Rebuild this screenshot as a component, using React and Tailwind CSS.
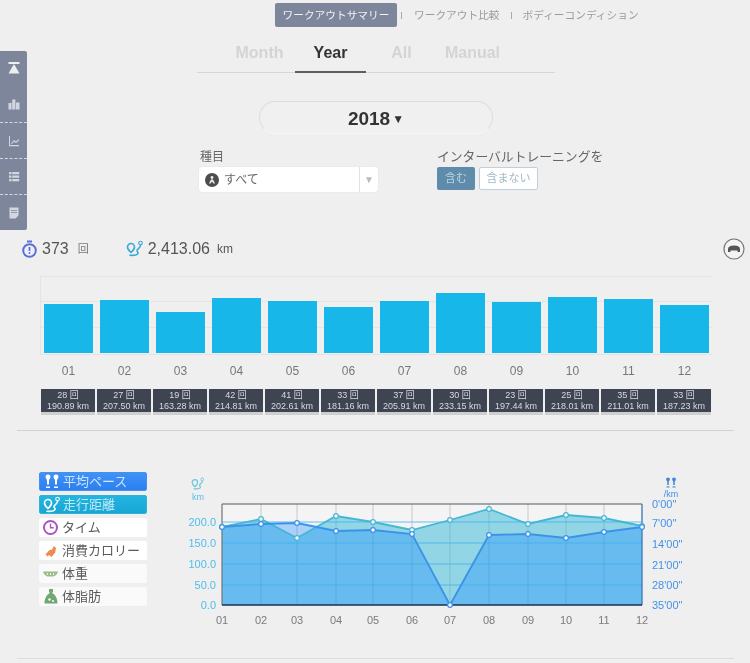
import React from 'react';

const months = [
  { m: '01', top: 304, count: 28, km: '190.89' },
  { m: '02', top: 300, count: 27, km: '207.50' },
  { m: '03', top: 312, count: 19, km: '163.28' },
  { m: '04', top: 298, count: 42, km: '214.81' },
  { m: '05', top: 301, count: 41, km: '202.61' },
  { m: '06', top: 307, count: 33, km: '181.16' },
  { m: '07', top: 301, count: 37, km: '205.91' },
  { m: '08', top: 293, count: 30, km: '233.15' },
  { m: '09', top: 302, count: 23, km: '197.44' },
  { m: '10', top: 297, count: 25, km: '218.01' },
  { m: '11', top: 299, count: 35, km: '211.01' },
  { m: '12', top: 305, count: 33, km: '187.23' },
];

const xs = [222, 261, 297, 336, 373, 412, 450, 489, 528, 566, 604, 642];
const dist = [527, 519, 538, 516, 522, 530, 520, 509, 524, 515, 518, 526];
const pace = [527, 524, 523, 531, 530, 534, 605, 535, 534, 538, 532, 527];

const line = (ys) => xs.map((x, i) => `${x},${ys[i]}`).join(' ');
const area = (ys) => `222,605 ${line(ys)} 642,605`;

const RouteIcon = ({ color, size = 18 }) => (
  <svg width={size} height={size} viewBox="0 0 18 18" fill="none">
    <path d="M5 3.500a3.500 3.500 0 0 0-3.500 3.500C1.500 9.500 5 12.500 5 12.500S8.500 9.500 8.500 7A3.500 3.500 0 0 0 5 3.500z" stroke={color} strokeWidth="1.600" />
    <circle cx="14.500" cy="3" r="1.800" stroke={color} strokeWidth="1.100" />
    <path d="M14.500 5.500c-.3 2.500-3 3.200-3.500 4.800-.4 1.400 1.500 1.600 1 3-.5 1.400-4 2.200-8 2" stroke={color} strokeWidth="1.600" strokeLinecap="round" />
  </svg>
);

const FeetIcon = ({ color, size = 16 }) => (
  <svg width={size} height={size} viewBox="0 0 16 16" fill={color}>
    <path d="M1.500 2.500a2.500 2 0 0 1 5 0c0 1.500-1 2.500-1.500 3.500v4.500H3V6C2.500 5 1.500 4 1.500 2.500z" />
    <path d="M9.500 2.500a2.500 2 0 0 1 5 0c0 1.500-1 2.500-1.500 3.500v4.500h-2V6c-.5-1-1.500-2-1.500-3.500z" />
    <rect x="2" y="12.500" width="4" height="1.500" />
    <rect x="10" y="12.500" width="4" height="1.500" />
  </svg>
);

const SideIcon = ({ kind }) => (
  <svg width="14" height="14" viewBox="0 0 14 14" fill={kind === 'top' ? '#eceef2' : '#d3d6df'}>
    {kind === 'top' && (
      <>
        <rect x="1.500" y="1" width="11" height="2" />
        <path d="M7 3 12.500 12.500h-11z" />
      </>
    )}
    {kind === 'bars' && (
      <>
        <rect x="1.500" y="6" width="3" height="6.500" />
        <rect x="5.200" y="2.500" width="3.200" height="10" />
        <rect x="9" y="5.500" width="3.500" height="7" />
      </>
    )}
    {kind === 'line' && (
      <>
        <path d="M2 2h1v9h9v1.200H2z" />
        <path d="M4 9.500 7 6l2 1.500 3-2.500v1.500l-3 2.500-2-1.500-2 2.500z" />
      </>
    )}
    {kind === 'list' && (
      <>
        <rect x="2" y="2" width="2.500" height="2.300" />
        <rect x="5.200" y="2" width="7" height="2.300" />
        <rect x="2" y="5.500" width="2.500" height="2.300" />
        <rect x="5.200" y="5.500" width="7" height="2.300" />
        <rect x="2" y="9" width="2.500" height="2.300" />
        <rect x="5.200" y="9" width="7" height="2.300" />
      </>
    )}
    {kind === 'doc' && (
      <path d="M2.500 1.500h9v8L8.500 12.500h-6zM4 4v.8h6V4zm0 2.200V7h6v-.8z" fillRule="evenodd" />
    )}
  </svg>
);

const Sidebar = () => (
  <div className="absolute left-0 top-[51px] w-[27px] h-[179px] bg-[#7e869c] rounded-r-[2px] flex flex-col">
    <div className="h-[34px] flex items-center justify-center"><SideIcon kind="top" /></div>
    <div className="h-[37px] flex items-center justify-center"><SideIcon kind="bars" /></div>
    <div className="h-[36px] flex items-center justify-center border-t border-dashed border-[#d5d7e0]"><SideIcon kind="line" /></div>
    <div className="h-[36px] flex items-center justify-center border-t border-dashed border-[#d5d7e0]"><SideIcon kind="list" /></div>
    <div className="h-[36px] flex items-center justify-center border-t border-dashed border-[#d5d7e0]"><SideIcon kind="doc" /></div>
  </div>
);

const legend = [
  {
    label: '平均ペース',
    cls: 'bg-gradient-to-b from-[#3f92f7] to-[#2b7ff0] text-[#cfe3ff] border border-[#4a90e8]',
    icon: <FeetIcon color="#ffffff" />,
  },
  {
    label: '走行距離',
    cls: 'bg-gradient-to-b from-[#22b4de] to-[#19a6d6] text-[#bfe8f5] border border-[#2fb4d8]',
    icon: <RouteIcon color="#ffffff" />,
  },
  {
    label: 'タイム',
    cls: 'bg-white text-[#5a5a5a]',
    icon: (
      <svg width="17" height="17" viewBox="0 0 17 17" fill="none" stroke="#a955c4">
        <circle cx="8.500" cy="8.500" r="6.500" strokeWidth="2" />
        <path d="M8.500 4.500v4.300h3.200" strokeWidth="1.400" />
      </svg>
    ),
  },
  {
    label: '消費カロリー',
    cls: 'bg-white text-[#5a5a5a]',
    icon: (
      <svg width="16" height="16" viewBox="0 0 16 16" fill="#f08a4e">
        <path d="M2.500 11.500 6 7.500l1.500-1 1 .8L11 3l2 2-.8 4.500L8.500 14l-2.500-2-1.500 1.500z" />
      </svg>
    ),
  },
  {
    label: '体重',
    cls: 'bg-white/70 text-[#5a5a5a]',
    icon: (
      <svg width="17" height="16" viewBox="0 0 17 16" fill="#9dbb84">
        <path d="M1 5.500h15c-.5 2.500-2.500 4.500-4.500 5h-6C3.500 10 1.500 8 1 5.500z" />
        <path d="M5 7l.8 2M8.500 7v2M12 7l-.8 2" stroke="#ffffff" strokeWidth=".9" />
      </svg>
    ),
  },
  {
    label: '体脂肪',
    cls: 'bg-white/70 text-[#5a5a5a]',
    icon: (
      <svg width="16" height="17" viewBox="0 0 16 17" fill="#6fa873">
        <path d="M6 1h4v2.500l-.8 1.500c2.800 1.500 5.300 5 5.300 10.500h-13C1.500 10 4 6.500 6.800 5L6 3.500z" />
        <circle cx="6.500" cy="11.500" r="1.200" fill="#ffffff" />
        <circle cx="10" cy="13" r="1" fill="#ffffff" />
      </svg>
    ),
  },
];

const leftAxis = [
  ['200.0', 526],
  ['150.0', 547],
  ['100.0', 568],
  ['50.0', 589],
  ['0.0', 609],
];

const rightAxis = [
  ["0'00\"", 508],
  ["7'00\"", 527],
  ["14'00\"", 548],
  ["21'00\"", 569],
  ["28'00\"", 589],
  ["35'00\"", 609],
];

const PaceChart = () => (
  <svg width="530" height="160" viewBox="180 470 530 160" className="block">
    <rect x="222" y="504" width="420" height="101" fill="#f4f4f4" />
    {xs.map((x) => (
      <line key={x} x1={x} y1="504" x2={x} y2="605" stroke="#c4c8cc" strokeWidth="1" />
    ))}
    <polygon points={area(dist)} fill="#2fb8d8" fillOpacity="0.5" />
    <polygon points={area(pace)} fill="#0a81ff" fillOpacity="0.31" />
    {[522, 543, 564, 585].map((y) => (
      <line key={y} x1="222" y1={y} x2="642" y2={y} stroke="#3fb0f0" strokeWidth="1" strokeOpacity="0.8" />
    ))}
    <line x1="222" y1="504" x2="642" y2="504" stroke="#555a5e" strokeWidth="1.200" />
    <line x1="222" y1="504" x2="222" y2="605" stroke="#6a7078" strokeWidth="1" />
    <line x1="642" y1="504" x2="642" y2="605" stroke="#3b78ba" strokeWidth="1.200" />
    <line x1="222" y1="605" x2="642" y2="605" stroke="#17304f" strokeWidth="1.400" />
    <polyline points={line(dist)} fill="none" stroke="#45b7d4" strokeWidth="1.800" />
    <polyline points={line(pace)} fill="none" stroke="#3a93e8" strokeWidth="1.800" />
    {xs.map((x, i) => (
      <circle key={`d${x}`} cx={x} cy={dist[i]} r="2.300" fill="#ffffff" stroke="#45b7d4" strokeWidth="1.200" />
    ))}
    {xs.map((x, i) => (
      <circle key={`p${x}`} cx={x} cy={pace[i]} r="2.300" fill="#ffffff" stroke="#3a93e8" strokeWidth="1.200" />
    ))}
    <g fontSize="11" fill="#4fbdec" textAnchor="end">
      {leftAxis.map(([t, y]) => (
        <text key={t} x="216" y={y}>{t}</text>
      ))}
    </g>
    <g fontSize="11" fill="#4490e6">
      {rightAxis.map(([t, y]) => (
        <text key={t} x="652" y={y}>{t}</text>
      ))}
    </g>
    <g fontSize="11" fill="#7b7b7b" textAnchor="middle">
      {xs.map((x, i) => (
        <text key={x} x={x} y="624">{months[i].m}</text>
      ))}
    </g>
    <text x="198" y="500" fontSize="9" fill="#58bfe8" textAnchor="middle">km</text>
    <text x="671" y="497" fontSize="9" fill="#4490e6" textAnchor="middle">/km</text>
    <svg x="191" y="477" width="14" height="14" viewBox="0 0 18 18">
      <RouteIcon color="#6cc6de" />
    </svg>
    <svg x="665" y="477" width="12" height="12" viewBox="0 0 16 16">
      <FeetIcon color="#3f86d8" />
    </svg>
  </svg>
);

export default function App() {
  return (
    <div className="w-[750px] h-[663px] overflow-hidden bg-[#efefef]">
      <div className="relative h-[663px] blur-[0.4px] font-['Liberation_Sans','Noto_Sans_CJK_JP',sans-serif]">
        <Sidebar />

        <nav className="flex items-center pl-[275px] pt-[3px] text-[10.7px] text-[#9a9a9a]">
          <span className="w-[122px] h-[24px] flex items-center justify-center rounded-[2px] bg-[#7e869c] text-[#f2f3f6]">ワークアウトサマリー</span>
          <span className="ml-[4px] w-px h-[7px] bg-[#aaa]" />
          <span className="ml-[12px]">ワークアウト比較</span>
          <span className="ml-[11px] w-px h-[7px] bg-[#aaa]" />
          <span className="ml-[11px]">ボディーコンディション</span>
        </nav>

        <div className="ml-[197px] w-[358px] h-[33px] mt-[13px] pl-[27px] flex border-b border-[#d6d6d6] text-[16px] font-bold text-[#d4d4d4]">
          <span className="w-[71px] text-center leading-[26px]">Month</span>
          <span className="w-[71px] h-[33px] text-center leading-[26px] text-[#333] border-b-2 border-[#5e5e5e]">Year</span>
          <span className="w-[71px] text-center leading-[26px]">All</span>
          <span className="w-[71px] text-center leading-[26px]">Manual</span>
        </div>

        <div className="ml-[259px] w-[234px] h-[33px] mt-[28px] pt-[3px] flex items-center justify-center gap-[2px] rounded-full border border-[#dcdcdc] border-b-[#f6f6f6] bg-[#f0f0f0] text-[19px] font-bold text-[#333]">
          2018<span className="text-[12px] leading-none">▼</span>
        </div>

        <div className="flex mt-[15px] ml-[199px] h-[44px]">
          <div className="w-[179px]">
            <div className="pl-px text-[12px] leading-[16px] mb-[2px] text-[#666]">種目</div>
            <div className="h-[25px] flex items-center rounded-[3px] bg-white shadow-[0_0_1px_#ccc] pl-[6px]">
              <svg width="14" height="14" viewBox="0 0 14 14">
                <circle cx="7" cy="7" r="7" fill="#4d4d4d" />
                <circle cx="7" cy="4.500" r="1.400" fill="#f0f0f0" />
                <path d="M4 10.500 6 6.500h2l2 4H8.500L7 8.500l-1.500 2z" fill="#f0f0f0" />
              </svg>
              <span className="ml-[5px] text-[12px] text-[#666]">すべて</span>
              <span className="ml-auto w-[19px] h-[25px] border-l border-[#e2e2e2] flex items-center justify-center text-[10px] text-[#bbb]">▼</span>
            </div>
          </div>
          <div className="ml-[59px]">
            <div className="text-[12.8px] leading-[16px] mb-[2px] text-[#666]">インターバルトレーニングを</div>
            <div className="flex gap-[4px]">
              <span className="w-[38px] h-[23px] flex items-center justify-center rounded-[2px] bg-[#5f8cab] text-[11px] text-[#bcd2e0]">含む</span>
              <span className="w-[59px] h-[23px] flex items-center justify-center rounded-[2px] bg-white border border-[#bcd0de] text-[11px] text-[#a0b8c8]">含まない</span>
            </div>
          </div>
        </div>

        <div className="flex items-center h-[22px] mt-[45px] pl-[21px] pr-[5px] text-[16px] text-[#555]">
          <svg width="17" height="18" viewBox="0 0 17 18" fill="none">
            <rect x="6" y="0.500" width="5" height="2" fill="#5b6fd6" />
            <circle cx="8.500" cy="10.500" r="6.300" stroke="#5b6fd6" strokeWidth="2" fill="#eef0fb" />
            <path d="M8.500 7v4" stroke="#5b6fd6" strokeWidth="1.800" />
            <circle cx="8.500" cy="13" r="1" fill="#5b6fd6" />
          </svg>
          <span className="ml-[4px]">373</span>
          <span className="ml-[9px] text-[11px] text-[#777]">回</span>
          <span className="ml-[37px]"><RouteIcon color="#3aa6d8" /></span>
          <span className="ml-[4px]">2,413.06</span>
          <span className="ml-[7px] text-[12px]">km</span>
          <svg className="ml-auto" width="22" height="22" viewBox="0 0 22 22" fill="none">
            <circle cx="11" cy="11" r="10" stroke="#777" strokeWidth="1.200" fill="#f4f4f4" />
            <path d="M5 14v-3c0-2 2-3.500 6-3.500s6 1.500 6 3.500v3h-2.500v-1.500h-7V14z" fill="#555" />
          </svg>
        </div>

        <div className="relative ml-[40px] w-[672px] h-[79px] mt-[16px] border-t border-b border-l border-[#e4e4e4] pl-[3px] flex items-end gap-[7px] pb-px">
          <div className="absolute left-0 right-0 top-[24px] h-[27px] border-t border-b border-[#e4e4e4]" />
          {months.map((d) => (
            <div
              key={d.m}
              className="relative w-[49px] bg-[#18b7ea]"
              style={{ height: 353 - d.top }}
            />
          ))}
        </div>

        <div className="ml-[44px] flex gap-[7px] mt-[7px] h-[18px]">
          {months.map((d) => (
            <div key={d.m} className="w-[49px] text-center text-[12px] leading-[18px] text-[#777]">{d.m}</div>
          ))}
        </div>

        <div className="ml-[41px] flex gap-[2px] mt-[9px]">
          {months.map((d) => (
            <div key={d.m} className="w-[54px] h-[26px] border-b-[3px] border-[#cfcfcf]">
              <div className="h-[23px] bg-[#3f4452] text-center text-[9px] leading-[10.500px] pt-px text-[#d8dade]">
                <div>{d.count} 回</div>
                <div>{d.km} km</div>
              </div>
            </div>
          ))}
        </div>

        <div className="ml-[17px] w-[717px] h-px mt-[15px] bg-[#d2d2d2]" />

        <div className="flex mt-[39px] ml-[39px] h-[160px]">
          <div className="w-[108px] flex flex-col gap-[4px] mt-[2px]">
            {legend.map((l) => (
              <div key={l.label} className={`h-[19px] flex items-center rounded-[2px] ${l.cls}`}>
                <span className="w-[23px] flex justify-center shrink-0">{l.icon}</span>
                <span className="text-[13px] whitespace-nowrap">{l.label}</span>
              </div>
            ))}
          </div>
          <div className="ml-[33px]">
            <PaceChart />
          </div>
        </div>

        <div className="ml-[17px] w-[717px] h-px mt-[28px] bg-[#dcdcdc]" />
      </div>
    </div>
  );
}
